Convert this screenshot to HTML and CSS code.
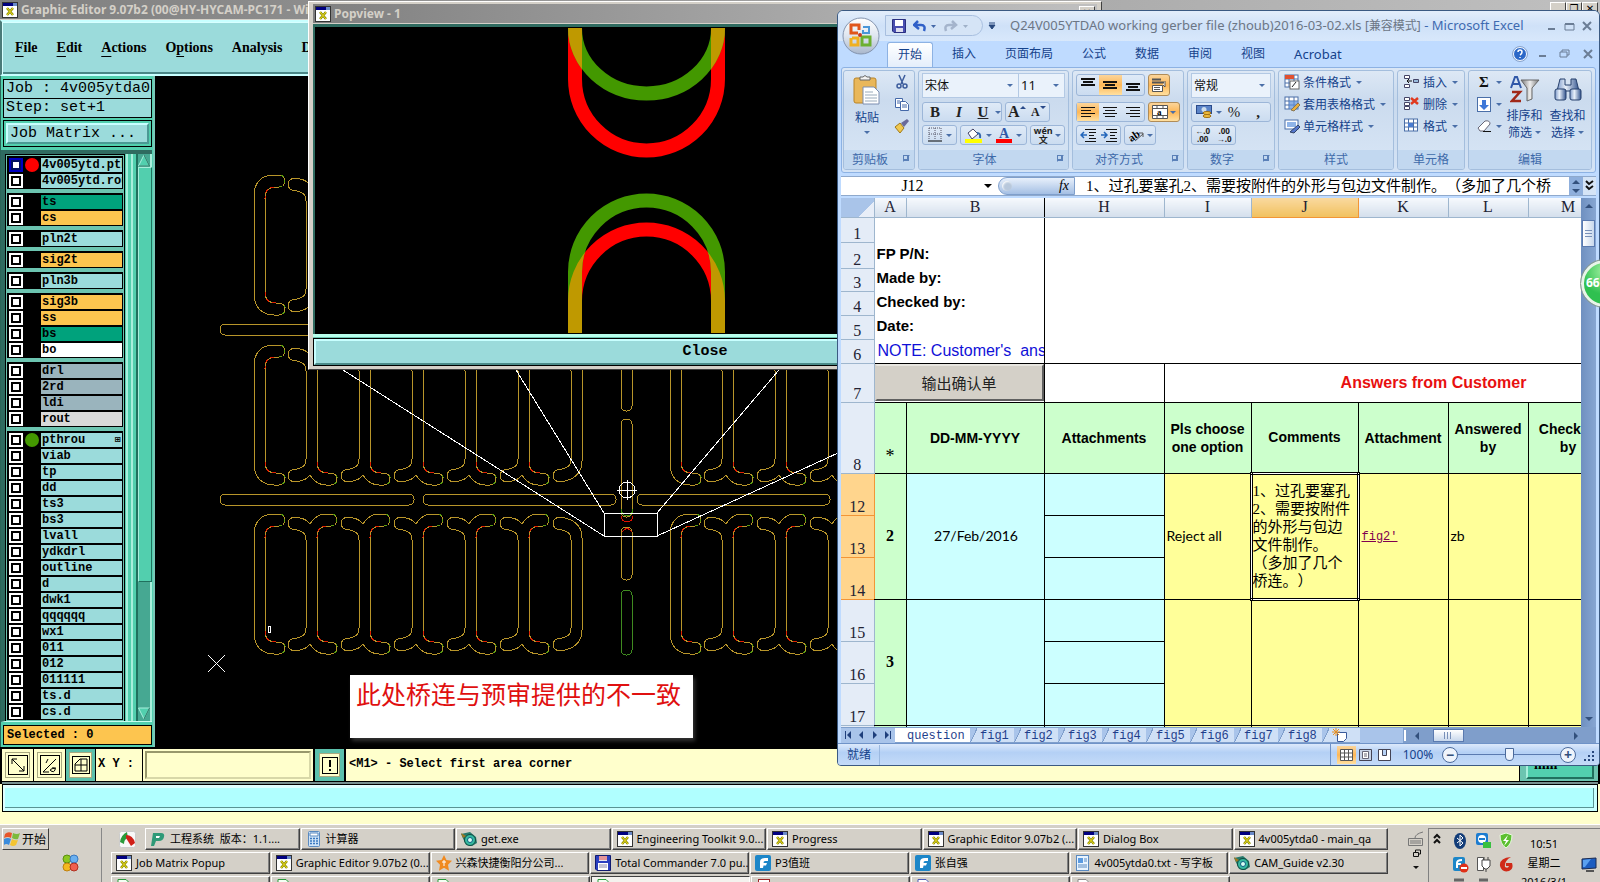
FILE: index.html
```html
<!DOCTYPE html>
<html lang="zh-CN">
<head>
<meta charset="utf-8">
<title>Graphic Editor 9.07b2</title>
<link rel="stylesheet" href="styles.css">
</head>
<body>
<svg class="defs" aria-hidden="true">
  <defs>
    <symbol id="xapp" viewBox="0 0 16 16"><rect x="0.500" y="0.500" width="15" height="15" fill="#fff" stroke="#333"/><rect x="1" y="1" width="10" height="3" fill="#000080"/><rect x="11" y="1" width="4" height="3" fill="#6a8ac8"/><path d="M5 6l6 7M11 6l-6 7" stroke="#8a8a00" stroke-width="2.500"/><path d="M5 6l6 7M11 6l-6 7" stroke="#f0e020" stroke-width="1"/></symbol>
    <g id="wl"><path d="M0 21C0 7 8 0 20 0H25C33 0 33 12 25 12H22C14 12 11 16 11 24V117C11 124 14 128 22 128H25C33 128 33 140 25 140H20C8 140 0 132 0 119Z"/></g>
    <g id="wm"><path d="M0 26C0 18 -5 17 -9 16C-16 16 -18 13 -18 9C-18 4 -12 2 -6 4Q0 5 4 10Q10 0 20 0H25C33 0 33 12 25 12H22C14 12 11 16 11 24V117C11 124 14 128 22 128H25C33 128 33 140 25 140H20Q10 140 4 130Q0 135 -6 136C-12 138 -18 136 -18 131C-18 127 -16 124 -9 124C-5 123 0 122 0 114Z"/></g>
    <g id="wr"><path d="M0 26C0 18 -5 17 -9 16C-16 16 -18 13 -18 9C-18 4 -12 2 -6 4Q11 8 11 24V116Q11 132 -6 136C-12 138 -18 136 -18 131C-18 127 -16 124 -9 124C-5 123 0 122 0 114Z"/></g>
    <g id="hooks">
      <path d="M20 12C14 12 11 16 11 24M11 117C11 124 14 128 22 128" stroke="#e02000" stroke-dasharray="4 3"/>
      <path d="M25 12C33 12 33 0 25 0M30 130C33 134 31 139 25 140" stroke="#5c9c10" stroke-dasharray="3 4"/>
    </g>
    <g id="block">
      <use href="#wl" x="255"/><use href="#wm" x="307"/><use href="#wm" x="360"/><use href="#wm" x="413"/><use href="#wm" x="466"/><use href="#wm" x="519"/><use href="#wr" x="572"/>
      <use href="#hooks" x="255"/><use href="#hooks" x="307"/><use href="#hooks" x="360"/><use href="#hooks" x="413"/><use href="#hooks" x="466"/><use href="#hooks" x="519"/>
      <use href="#wl" x="671"/><use href="#wm" x="723"/><use href="#wm" x="776"/><use href="#wm" x="829"/>
      <use href="#hooks" x="671"/><use href="#hooks" x="723"/><use href="#hooks" x="776"/>
    </g>
    <g id="slots"><rect x="221" y="0" width="194" height="11" rx="5"/><rect x="424" y="0" width="193" height="11" rx="5"/><rect x="638" y="0" width="193" height="11" rx="5"/></g>
    <mask id="redzone" maskUnits="userSpaceOnUse" x="300" y="0" width="800" height="400">
      <path d="M575 0V79A71 71 0 0 0 718 79V0M575 340V301A71 71 0 0 1 718 301V340" fill="none" stroke="#fff" stroke-width="14"/>
    </mask>
    <linearGradient id="ring" x2="0" y2="1"><stop stop-color="#fff"/><stop offset=".5" stop-color="#dfe6f0"/><stop offset="1" stop-color="#a9b7cc"/></linearGradient>
    <linearGradient id="steel" x2="1" y2="0"><stop stop-color="#7c98c8"/><stop offset=".4" stop-color="#e8f0fa"/><stop offset="1" stop-color="#34558f"/></linearGradient>
    <linearGradient id="funnel" x2="1" y2="0"><stop stop-color="#777"/><stop offset=".5" stop-color="#eee"/><stop offset="1" stop-color="#777"/></linearGradient>
    <symbol id="grid-ic" viewBox="0 0 16 16"><rect x="1" y="1" width="13" height="12" fill="#fff" stroke="#4a6fa8"/><path d="M1 5h13M1 9h13M5 1v12M10 1v12" stroke="#4a6fa8"/></symbol>
    <symbol id="sheet-ic" viewBox="0 0 16 16"><path d="M2 .5h8l4 4V15.500H2z" fill="#f4fff4" stroke="#2a9a3a"/><rect x="0" y="3" width="8" height="8" fill="#2fa040"/></symbol>
    <symbol id="flash" viewBox="0 0 16 16"><rect width="16" height="16" rx="2" fill="#1c86c8"/><path d="M5 13V7q0-4 5-4h3v3h-3q-1.500 0-1.500 2H12l-1 2.500H8.500L8 13z" fill="#fff"/></symbol>
    <symbol id="eye" viewBox="0 0 16 16"><path d="M0 3l9-2 6 5 1 6-5 3-6-1z" fill="#287a6c"/><circle cx="9" cy="9" r="5.500" fill="#35b9a0" stroke="#104a40"/><circle cx="9" cy="9" r="2.500" fill="#d8fff4" stroke="#0c5c80"/><path d="M0 2l5 3-3 2z" fill="#a07820"/></symbol>
  </defs>
</svg>

<main class="editor">
  <header class="titlebar"><svg class="ic16"><use href="#xapp"/></svg><span class="cap">Graphic Editor 9.07b2 (00@HY-HYCAM-PC171 - Windows)</span>
    <span class="winbtns"><button aria-label="Minimize">_</button><button aria-label="Restore">❐</button><button aria-label="Close">✕</button></span></header>
  <nav class="menubar"><a><u>F</u>ile</a><a><u>E</u>dit</a><a><u>A</u>ctions</a><a>O<u>p</u>tions</a><a>Analysis</a><a>DFM</a></nav>
  <div class="work">
    <aside class="panel">
      <div class="field">Job : 4v005ytda0</div>
      <div class="field step">Step: set+1</div>
      <div class="matrix"><button>Job Matrix ...</button></div>
      <div class="layers">
        <div class="list">
          <div class="grp">
            <label class="row"><input type="checkbox" class="sel"><i class="dot red"></i><span>4v005ytd.pth</span></label>
            <label class="row"><input type="checkbox"><i></i><span>4v005ytd.rou</span></label></div>
          <div class="grp">
            <label class="row"><input type="checkbox"><i></i><span class="green">ts</span></label>
            <label class="row"><input type="checkbox"><i></i><span class="amber">cs</span></label></div>
          <div class="grp"><label class="row"><input type="checkbox"><i></i><span>pln2t</span></label></div>
          <div class="grp"><label class="row"><input type="checkbox"><i></i><span class="amber">sig2t</span></label></div>
          <div class="grp"><label class="row"><input type="checkbox"><i></i><span>pln3b</span></label></div>
          <div class="grp">
            <label class="row"><input type="checkbox"><i></i><span class="amber">sig3b</span></label>
            <label class="row"><input type="checkbox"><i></i><span class="amber">ss</span></label>
            <label class="row"><input type="checkbox"><i></i><span class="green">bs</span></label>
            <label class="row"><input type="checkbox"><i></i><span class="white">bo</span></label></div>
          <div class="grp">
            <label class="row"><input type="checkbox"><i></i><span class="slate">drl</span></label>
            <label class="row"><input type="checkbox"><i></i><span class="slate">2rd</span></label>
            <label class="row"><input type="checkbox"><i></i><span class="slate">ldi</span></label>
            <label class="row"><input type="checkbox"><i></i><span class="pale">rout</span></label></div>
          <div class="grp">
            <label class="row"><input type="checkbox"><i class="dot grn"></i><span>pthrou<b class="mark">⊞</b></span></label>
            <label class="row"><input type="checkbox"><i></i><span>viab</span></label>
            <label class="row"><input type="checkbox"><i></i><span>tp</span></label>
            <label class="row"><input type="checkbox"><i></i><span>dd</span></label>
            <label class="row"><input type="checkbox"><i></i><span>ts3</span></label>
            <label class="row"><input type="checkbox"><i></i><span>bs3</span></label>
            <label class="row"><input type="checkbox"><i></i><span>lvall</span></label>
            <label class="row"><input type="checkbox"><i></i><span>ydkdrl</span></label>
            <label class="row"><input type="checkbox"><i></i><span>outline</span></label>
            <label class="row"><input type="checkbox"><i></i><span>d</span></label>
            <label class="row"><input type="checkbox"><i></i><span>dwk1</span></label>
            <label class="row"><input type="checkbox"><i></i><span>qqqqqq</span></label>
            <label class="row"><input type="checkbox"><i></i><span>wx1</span></label>
            <label class="row"><input type="checkbox"><i></i><span>011</span></label>
            <label class="row"><input type="checkbox"><i></i><span>012</span></label>
            <label class="row"><input type="checkbox"><i></i><span>011111</span></label>
            <label class="row"><input type="checkbox"><i></i><span>ts.d</span></label>
            <label class="row"><input type="checkbox"><i></i><span>cs.d</span></label></div>
        </div>
        <div class="vscroll"><svg width="12" height="13"><path d="M6 1L11.500 12H.5z" fill="#52cfae" stroke="#a8efdc"/><path d="M6 1l5.500 11H1" fill="none" stroke="#20705e"/></svg><div class="thumb"></div><svg width="12" height="13"><path d="M6 12L.5 1h11z" fill="#52cfae" stroke="#a8efdc"/><path d="M11.500 1L6 12" stroke="#20705e"/></svg></div>
      </div>
      <div class="selected">Selected : 0</div>
    </aside>
    <svg class="canvas">
      <g transform="translate(-155 -76)" fill="none" stroke="#b8952a" shape-rendering="crispEdges">
        <use href="#block" y="175"/><use href="#block" y="345"/><use href="#block" y="514"/>
        <use href="#slots" y="324"/><use href="#slots" y="494"/>
        <rect x="622" y="300" width="11" height="111" rx="5"/><rect x="622" y="419" width="11" height="98" rx="5"/>
        <path d="M622 516q1 6 6 6t6-6" stroke="#e01000"/><path d="M622 509q1 7 6 7t6-7" stroke="#3c9010"/>
        <rect x="622" y="527" width="11" height="53" rx="5"/><path d="M623 532q5-7 10 0" stroke="#e01000"/>
        <rect x="622" y="590" width="11" height="65" rx="5" stroke="#3f8a20"/>
        <g stroke="#fff"><path d="M344 370L605 536M517 370l88 143M780 370L658 513M658 536l181-83M605 513h53v23h-53z"/>
        <circle cx="628" cy="490" r="8"/><path d="M618 490h20M628 480v20M209 655l17 17M226 655l-17 17"/><rect x="269" y="626" width="2" height="6"/></g>
      </g>
    </svg>
    <p class="note">此处桥连与预审提供的不一致</p>
  </div>
  <div class="tools">
    <button class="tool" aria-label="Zoom"><svg width="20" height="20" fill="none" stroke="#000"><rect x=".5" y=".5" width="19" height="19"/><path d="M4 4l12 12M4 9V4h5M16 11v5h-5"/></svg></button>
    <button class="tool" aria-label="Angle"><svg width="20" height="20" fill="none" stroke="#000"><rect x=".5" y=".5" width="19" height="19"/><path d="M3 17L16 4M3 17h6M8 4l-2 4M12 13q4-1 3 2t-4 1 5-3"/></svg></button>
    <button class="tool on" aria-label="Grid"><svg width="18" height="18" fill="none" stroke="#000"><rect x=".5" y=".5" width="17" height="17"/><path d="M3 15V8l5-5h7v12zM9 3v12M3 9h12"/></svg></button>
    <label class="xy" for="xy">X Y :</label>
    <span class="xybox"><input id="xy" type="text"></span>
    <button class="tool on bang" aria-label="Alert"><svg width="16" height="17" fill="none" stroke="#000"><rect x=".5" y=".5" width="15" height="16"/><path d="M8 3v7M8 12v2" stroke-width="2"/></svg></button>
    <output class="msg">&lt;M1&gt; - Select first area corner</output>
    <div class="units"><button>mm</button></div>
  </div>
  <div class="cmd"></div>
</main>

<section class="popview">
  <header class="titlebar"><svg class="ic16"><use href="#xapp"/></svg><span class="cap">Popview - 1</span><span class="winbtns"><button aria-label="Close">✕</button></span></header>
  <svg class="view"><g transform="translate(-315 -27)" fill="none" stroke-width="14">
    <path d="M575 28V79A71 71 0 0 0 718 79V28M575 333V301A71 71 0 0 1 718 301V333" stroke="#f00"/>
    <path d="M575 28A71 65 0 0 0 718 28M575 333V272A71 71 0 0 1 718 272V333" stroke="#439800"/>
    <path d="M575 28A71 65 0 0 0 718 28M575 333V272A71 71 0 0 1 718 272V333" stroke="#bf9900" mask="url(#redzone)"/>
  </g></svg>
  <div class="closebar"><button>Close</button></div>
</section>

<section class="excel">
  <header class="xtitle">
    <div class="qat">
      <svg width="14" height="14"><path d="M.5.500h13v13H2L.5 12z" fill="#4a4fb0" stroke="#2a2f80"/><rect x="3" y="1" width="8" height="6" fill="#fff"/><rect x="4" y="9" width="7" height="4" fill="#dde"/></svg>
      <svg width="24" height="14" class="q2"><path d="M5 2L1 6l5 4M2 6h6q5 0 3 6" fill="none" stroke="#3060c8" stroke-width="2.500"/><path d="M18 6h5l-2.500 3z" fill="#4468a8"/></svg>
      <svg width="24" height="14" class="q3"><path d="M8 2l4 4-5 4M11 6H5q-5 0-3 6" fill="none" stroke="#a4b4cc" stroke-width="2.500"/><path d="M19 6h5l-2.500 3z" fill="#9fb0c8"/></svg>
    </div>
    <svg width="8" height="8" class="qmore"><path d="M1 1h6M1 3h6L4 7z" fill="#26477c" stroke="#26477c"/></svg>
    <h1>Q24V005YTDA0 working gerber file (zhoub)2016-03-02.xls <small>[兼容模式]</small> <b>- Microsoft Excel</b></h1>
    <span class="wc"><svg width="44" height="12" fill="none" stroke="#6b7d95" stroke-width="2"><path d="M0 9h7"/><path d="M17 4h9v6h-9z" stroke-width="1"/><path d="M17 4h9"/><path d="M35 2l8 8M43 2l-8 8"/></svg></span>
  </header>
  <svg class="orb" width="38" height="38"><circle cx="19" cy="19" r="18" fill="url(#ring)" stroke="#8494ae"/><g fill="none" stroke-width="3"><path d="M16 16H9V8h8v5" stroke="#e0561c"/><path d="M21 13v3h6v-6h-6" stroke="#4a96d8" stroke-width="2"/><path d="M9 21v7h7v-7h-6" stroke="#f0b020"/><path d="M20 20h8v8h-8z" stroke="#6cb030"/></g><circle cx="18" cy="18" r="2" fill="#c83c20"/></svg>
  <nav class="xtabs">
    <a class="on">开始</a><a>插入</a><a>页面布局</a><a>公式</a><a>数据</a><a>审阅</a><a>视图</a><a>Acrobat</a>
    <span class="wc"><svg width="82" height="16" fill="none" stroke="#6b7d95"><circle cx="8" cy="8" r="6.500" fill="#2c68c8" stroke="#fff"/><circle cx="8" cy="8" r="7.500" stroke="#8aa4cc"/><path d="M6 6q0-2 2-2t2 2-2 3M8 11v1" stroke="#fff" stroke-width="1.500"/><path d="M27 10h7" stroke-width="2"/><path d="M48 6h7v5h-7zM50 6V4h7v5h-2"/><path d="M72 4l8 8M80 4l-8 8" stroke-width="2"/></svg></span>
  </nav>
  <div class="ribbon">
    <div class="rg clip"><div class="rb">
      <button class="big"><svg width="28" height="30"><rect x="1" y="3" width="22" height="25" rx="2" fill="#e9b75a" stroke="#b98426"/><path d="M7 5V2h3q2-3 4 0h3v3z" fill="#f4f4f4" stroke="#666"/><path d="M10 12h11l5 5v12H10z" fill="#fff" stroke="#7a8db0"/><path d="M12 17h8M12 20h12M12 23h12M12 26h12" stroke="#9ab"/></svg><span>粘贴</span><i class="car"></i></button>
      <div class="stack">
        <button aria-label="剪切"><svg width="16" height="16" fill="none" stroke="#3c5c9c"><path d="M5 1l4 9M11 1L7 10" stroke-width="1.500"/><circle cx="5" cy="12" r="2" stroke-width="1.500"/><circle cx="11" cy="12" r="2" stroke-width="1.500"/></svg></button>
        <button aria-label="复制"><svg width="16" height="16" fill="#fff" stroke="#4468a8"><path d="M1.500 2.500h7v9h-7z"/><path d="M6.500 5.500h5l3 3v6h-8z"/><path d="M8 9h5M8 11h5M3 5h3M3 7h3"/></svg></button>
        <button aria-label="格式刷"><svg width="16" height="16"><path d="M1 9l5-4 4 5-4 5z" fill="#f0c850" stroke="#a07818"/><path d="M7 5l6-4 2 2-5 6z" fill="#6a6a9a"/></svg></button>
      </div></div><h2 class="hasdl">剪贴板<i class="dl"></i></h2></div>
    <div class="rg font"><div class="rb rows">
      <div class="r"><span class="combo w95"><select aria-label="字体"><option>宋体</option></select></span><span class="combo w46"><select aria-label="字号"><option>11</option></select></span></div>
      <div class="r"><span class="seg s80"><button><b>B</b></button><button><b><i>I</i></b></button><button><b><u>U</u></b></button><i class="car"></i></span><span class="seg s45"><button class="ga">A<i class="gu"></i></button><button class="sa">A<i class="gd"></i></button></span></div>
      <div class="r"><span class="seg s35"><svg width="16" height="16" fill="none" stroke="#556" stroke-dasharray="1 1"><path d="M2 1v12M8 1v12M14 1v12M2 1h12M2 7h12"/><path d="M1 14h14" stroke="#000" stroke-dasharray="none"/></svg><i class="car"></i></span>
        <span class="seg s66"><svg width="17" height="16"><path d="M3 6l5-4 5 5-6 5z" fill="#fff" stroke="#446"/><path d="M12 6q4 0 3 5" fill="none" stroke="#36a" stroke-width="2"/><rect y="12" width="17" height="4" fill="#ff0"/></svg><i class="car"></i><span class="fc">A</span><i class="car"></i></span>
        <span class="seg s35"><span class="wen"><span>wén</span><span>文</span></span><i class="car"></i></span></div>
    </div><h2 class="hasdl">字体<i class="dl"></i></h2></div>
    <div class="rg align"><div class="rb rows">
      <div class="r"><span class="seg s69 top"><button><svg width="14" height="14"><path d="M0 1h14M2 4h10M0 7h14" stroke="#111" stroke-width="2"/></svg></button><button class="hot"><svg width="14" height="14"><path d="M0 4h14M2 7h10M0 10h14" stroke="#111" stroke-width="2"/></svg></button><button><svg width="14" height="14"><path d="M0 6h14M2 9h10M0 12h14" stroke="#111" stroke-width="2"/></svg></button></span><span class="seg s22 top hot"><svg width="16" height="16" fill="#fff" stroke="#555"><path d="M1 2.500h9M1 5.500h12" stroke-width="2"/><path d="M1.500 8.500h10v6h-10z"/><path d="M3 10.500h6M3 12.500h6M14 4v6l-2-2"/></svg></span></div>
      <div class="r"><span class="seg s69"><button class="hot"><svg width="14" height="13"><path d="M0 1.500h14M0 4.500h10M0 7.500h14M0 10.500h10" stroke="#111"/></svg></button><button><svg width="14" height="13"><path d="M0 1.500h14M2 4.500h10M0 7.500h14M2 10.500h10" stroke="#111"/></svg></button><button><svg width="14" height="13"><path d="M0 1.500h14M4 4.500h10M0 7.500h14M4 10.500h10" stroke="#111"/></svg></button></span><span class="seg s32 hot"><svg width="16" height="14"><path d="M.5.500h15v13H.5zM5 .5v3M11 .5v3M5 10.500v3M11 10.500v3M.5 3.500h15M.5 10.500h15" fill="#fff" stroke="#555"/><text x="5" y="10" font-size="9" font-weight="bold">a</text></svg><i class="car"></i></span></div>
      <div class="r"><span class="seg s45"><button><svg width="16" height="14"><path d="M5 1.500h11M9 4.500h7M9 7.500h5M9 10.500h7M5 13.500h11" stroke="#111"/><path d="M7 7H1M4 4L1 7l3 3" stroke="#26b" stroke-width="1.500" fill="none"/></svg></button><button><svg width="16" height="14"><path d="M5 1.500h11M9 4.500h7M9 7.500h5M9 10.500h7M5 13.500h11" stroke="#111"/><path d="M0 7h6M3 4l3 3-3 3" stroke="#26b" stroke-width="1.500" fill="none"/></svg></button></span><span class="seg s32"><svg width="18" height="16"><text x="1" y="13" font-size="11" font-weight="bold" transform="rotate(-35 6 9)">ab</text><path d="M8 14l8-7M16 6v4M16 6h-4" stroke="#555"/></svg><i class="car"></i></span></div>
    </div><h2 class="hasdl">对齐方式<i class="dl"></i></h2></div>
    <div class="rg num"><div class="rb rows">
      <div class="r"><span class="combo w80"><select aria-label="数字格式"><option>常规</option></select></span></div>
      <div class="r"><span class="seg s80"><button><svg width="17" height="16"><rect x=".5" y="1.500" width="15" height="8" fill="#5b84c8" stroke="#2a4a8a"/><circle cx="8" cy="5.500" r="2.500" fill="#cde"/><ellipse cx="11" cy="9" rx="4" ry="1.500" fill="#f4c040" stroke="#a07010"/><ellipse cx="11" cy="12" rx="4" ry="1.500" fill="#f4c040" stroke="#a07010"/></svg></button><i class="car"></i><button>%</button><button><b>,</b></button></span></div>
      <div class="r"><span class="seg s45"><button class="dec">←.0<br>.00</button><button class="dec">.00<br>→.0</button></span></div>
    </div><h2 class="hasdl">数字<i class="dl"></i></h2></div>
    <div class="rg sty"><div class="rb lst">
      <button><svg width="16" height="16"><use href="#grid-ic"/><path d="M1 1h9v4H1z" fill="#e05030"/><rect x="6" y="7" width="9" height="8" fill="#fff" stroke="#666"/><path d="M8 13l4-5" stroke="#222"/></svg>条件格式<i class="car"></i></button>
      <button><svg width="16" height="16"><use href="#grid-ic"/><path d="M5 5h9v8H5z" fill="#5d8fd8" opacity=".7"/><path d="M7 14l7-7 2 2-6 6z" fill="#e8b040" stroke="#875"/></svg>套用表格格式<i class="car"></i></button>
      <button><svg width="16" height="16"><rect x="1" y="2" width="13" height="9" fill="#fff" stroke="#4a6fa8"/><path d="M3 4h9v5H3z" fill="#8fb4e8"/><path d="M6 14l8-7 2 2-6 6z" fill="#5577cc" stroke="#346"/></svg>单元格样式<i class="car"></i></button>
    </div><h2>样式</h2></div>
    <div class="rg cel"><div class="rb lst">
      <button><svg width="17" height="16" fill="#fff" stroke="#446"><path d="M1.500 1.500h5v3h-5zM1.500 10.500h5v3h-5z"/><path d="M10.500 5.500h5v3h-5z" fill="#9bd"/><path d="M4 7h5M4 7l2-2M4 7l2 2" stroke="#111"/></svg>插入<i class="car"></i></button>
      <button><svg width="17" height="16" fill="#fff" stroke="#446"><path d="M1.500 1.500h5v3h-5zM1.500 6.500h5v3h-5zM1.500 10.500h5v3h-5z"/><path d="M8 2l7 6M15 2L8 8" stroke="#e03a20" stroke-width="2.500"/></svg>删除<i class="car"></i></button>
      <button><svg width="17" height="16"><use href="#grid-ic"/><path d="M5 5h5v4H5z" fill="#4a7cd0"/></svg>格式<i class="car"></i></button>
    </div><h2>单元格</h2></div>
    <div class="rg edt"><div class="rb">
      <div class="lst ed">
        <button><b class="sig">Σ</b><i class="car"></i></button>
        <button><svg width="14" height="15"><rect x=".5" y=".5" width="13" height="14" fill="#fff" stroke="#4a6fa8"/><path d="M5 3h4v5h3l-5 5-5-5h3z" fill="#3f78d8"/></svg><i class="car"></i></button>
        <button><svg width="14" height="14"><path d="M1 9l7-7q5-1 5 3l-6 7H3z" fill="#fff" stroke="#667"/><path d="M6 12.500h8" stroke="#111"/></svg><i class="car"></i></button></div>
      <button class="big w"><svg width="30" height="28"><path d="M11 5h18l-7 8v11l-5 2V13z" fill="url(#funnel)" stroke="#666"/><path d="M1 13L5 2h2l4 11M3 9h6" fill="none" stroke="#3058a8" stroke-width="2"/><path d="M2 17h8L2 26h9" fill="none" stroke="#a02818" stroke-width="2.500"/></svg><span>排序和</span><span>筛选<i class="car"></i></span></button>
      <button class="big w"><svg width="28" height="28" stroke="#26406c"><path d="M6 4h5v6h6V4h5l3 12H3z" fill="url(#steel)"/><rect x="1" y="14" width="11" height="11" rx="2" fill="url(#steel)"/><rect x="16" y="14" width="11" height="11" rx="2" fill="url(#steel)"/></svg><span>查找和</span><span>选择<i class="car"></i></span></button>
    </div><h2>编辑</h2></div>
  </div>
  <div class="fbar"><span class="nbox"><input aria-label="名称框" value="J12"><i class="tri"></i></span><span class="fx"><i class="knob"></i><em>fx</em></span><input class="formula" aria-label="编辑栏" value="1、过孔要塞孔2、需要按附件的外形与包边文件制作。（多加了几个桥"><span class="spin"><i class="up"></i><i class="dn"></i></span><button class="exp" aria-label="展开"><svg width="9" height="12" fill="none" stroke="#111" stroke-width="2"><path d="M1 1l3 3 4-3M1 6l3 3 4-3"/></svg></button></div>
  <div class="sheet">
    <div class="gridwrap">
      <table>
        <colgroup><col class="c33"><col class="c32"><col class="c138"><col class="c120"><col class="c87"><col class="c107"><col class="c90"><col class="c80"><col class="c80"><col class="c95"></colgroup>
        <thead><tr class="h19"><th class="corner"></th><th>A</th><th class="frz">B</th><th>H</th><th>I</th><th class="act">J</th><th>K</th><th>L</th><th>M</th><th></th></tr></thead>
        <tbody>
        <tr class="h25"><th>1</th><td colspan="2" class="frz"></td><td colspan="7"></td></tr>
        <tr class="h26"><th>2</th><td colspan="2" class="frz lb">FP P/N:</td><td colspan="7"></td></tr>
        <tr class="h23"><th>3</th><td colspan="2" class="frz lb">Made by:</td><td colspan="7"></td></tr>
        <tr class="h24"><th>4</th><td colspan="2" class="frz lb">Checked by:</td><td colspan="7"></td></tr>
        <tr class="h24"><th>5</th><td colspan="2" class="frz lb">Date:</td><td colspan="7"></td></tr>
        <tr class="h24 line"><th>6</th><td colspan="2" class="frz nt">NOTE: Customer's&nbsp; answer</td><td colspan="7"></td></tr>
        <tr class="h39 bx"><th>7</th><td colspan="2" class="bt"><button>输出确认单</button></td><td></td><td colspan="6" class="ans">Answers from Customer</td></tr>
        <tr class="h71 bx hd"><th>8</th><td class="star">*</td><td>DD-MM-YYYY</td><td>Attachments</td><td>Pls choose one option</td><td>Comments</td><td>Attachment</td><td>Answered by</td><td>Checked<br>by</td><td></td></tr>
        <tr class="h42 bx bd"><th class="act">12</th><td rowspan="3" class="n">2</td><td rowspan="3" class="cy ct">27/Feb/2016</td><td class="cy"></td><td rowspan="3">Reject all</td><td rowspan="3" class="cur">1、过孔要塞孔<br>2、需要按附件<br>的外形与包边<br>文件制作。<br>（多加了几个<br>桥连。）</td><td rowspan="3"><a href="#fig2">fig2'</a></td><td rowspan="3">zb</td><td rowspan="3"></td><td rowspan="3"></td></tr>
        <tr class="h42 bx bd"><th class="act">13</th><td class="cy"></td></tr>
        <tr class="h42 bx bd"><th class="act">14</th><td class="cy"></td></tr>
        <tr class="h42 bx bd"><th>15</th><td rowspan="3" class="n">3</td><td rowspan="3" class="cy"></td><td class="cy"></td><td rowspan="3"></td><td rowspan="3"></td><td rowspan="3"></td><td rowspan="3"></td><td rowspan="3"></td><td rowspan="3"></td></tr>
        <tr class="h42 bx bd"><th>16</th><td class="cy"></td></tr>
        <tr class="h42 bx bd"><th>17</th><td class="cy"></td></tr>
        <tr class="h42 bx bd"><th></th><td class="n"></td><td class="cy"></td><td class="cy"></td><td></td><td></td><td></td><td></td><td></td><td></td></tr>
        </tbody>
      </table>
    </div>
    <div class="xscroll"><i class="up"></i><span class="xthumb"></span><i class="dn"></i></div>
  </div>
  <div class="stabs">
    <svg width="54" height="14" fill="#1f3f7c"><path d="M4 3v8h1V3zM10 3v8L6 7zM22 3v8l-4-4zM32 3v8l4-4zM44 3v8l4-4zM49 3v8h1V3z"/></svg>
    <a class="on">question</a><a>fig1</a><a>fig2</a><a>fig3</a><a>fig4</a><a>fig5</a><a>fig6</a><a>fig7</a><a>fig8</a>
    <a class="new"><svg width="17" height="14"><path d="M5.500 4.500h9v6l-3 3h-6z" fill="#fff" stroke="#3a5a9a"/><path d="M4 0v8M0 4h8M1 1l6 6M7 1L1 7" stroke="#e89020"/></svg></a>
    <div class="hs"><i class="split"></i><i class="lf"></i><span class="hthumb"></span><i class="rt"></i></div>
  </div>
  <footer class="status"><span class="ready">就绪</span>
    <span class="vw"><button class="hot" aria-label="普通"><svg width="13" height="12"><path d="M.5.500h12v11H.5zM.5 4h12M.5 8h12M4.500.5v11M8.500.5v11" fill="#fff" stroke="#555"/></svg></button><button aria-label="页面布局"><svg width="13" height="12"><path d="M.5.500h12v11H.5z" fill="#c8d4e8" stroke="#445"/><path d="M3.500 2.500h6v7h-6zM5 5h3M5 7h3" fill="#fff" stroke="#667"/></svg></button><button aria-label="分页预览"><svg width="13" height="12"><path d="M.5.500h12v11H.5zM4.500.5v6h4v-6" fill="#fff" stroke="#445"/></svg></button></span>
    <span class="pct">100%</span><button class="zb" aria-label="缩小">−</button><input type="range" aria-label="缩放"><button class="zb" aria-label="放大">+</button><svg width="12" height="12" fill="#27477c"><path d="M9 2h2v2H9zM5 6h2v2H5zM9 6h2v2H9zM1 10h2v2H1zM5 10h2v2H5zM9 10h2v2H9z"/></svg>
  </footer>
</section>
<div class="badge">66</div>

<footer class="taskbar">
  <div class="startcol">
    <button class="start"><svg width="17" height="16"><path d="M1 3q3-3 7-1L7 7Q4 5 0 7z" fill="#e8562a"/><path d="M9 2q4 2 7 0l-2 6q-3 1-6-1z" fill="#7cba3c"/><path d="M0 8q4-2 7 0l-2 6q-3-2-5 0z" fill="#3c8cdc"/><path d="M8 8q3 2 6 1l-2 5q-3 2-6 0z" fill="#f4c430"/></svg>开始</button>
    <svg class="clover" width="18" height="18"><circle cx="5" cy="5" r="4" fill="#8cc820" stroke="#5a9010"/><circle cx="12" cy="5" r="4" fill="#6ab0f0" stroke="#3a78c0"/><circle cx="5" cy="13" r="4" fill="#f4b820" stroke="#c08010"/><circle cx="12" cy="13" r="4" fill="#f06050" stroke="#b03020"/></svg>
  </div>
  <div class="tasks">
    <div class="trow"><svg class="quick" width="17" height="17"><rect x=".5" y=".5" width="16" height="16" rx="2" fill="#f8f8f8" stroke="#ccc"/><path d="M1 11Q2 4 8 1l1 6q-4 1-4 6z" fill="#2a9a3a"/><path d="M7 4q7 0 9 8l-4 3-5-8z" fill="#d02018"/></svg>
      <button><svg class="ic16" viewBox="0 0 16 16"><path d="M3 2h8q4 0 3 4t-5 4H6l-2 5H1z" fill="#2f9a78"/><path d="M6 5h4l-1 2H6z" fill="#fff"/></svg><span>工程系统&nbsp; 版本：1.1....</span></button>
      <button><svg class="ic16" viewBox="0 0 16 16"><rect x="2.500" y=".5" width="11" height="15" rx="1" fill="#cfe4f8" stroke="#5a8ac0"/><path d="M4 2h8v3H4z" fill="#fff" stroke="#5a8ac0"/><path d="M4 7.500h8M4 10h8M4 12.500h8" stroke="#3a78c0" stroke-width="1.500" stroke-dasharray="2 1"/></svg><span>计算器</span></button>
      <button><svg class="ic16"><use href="#eye"/></svg><span>get.exe</span></button>
      <button><svg class="ic16"><use href="#xapp"/></svg><span>Engineering Toolkit 9.0...</span></button>
      <button><svg class="ic16"><use href="#xapp"/></svg><span>Progress</span></button>
      <button><svg class="ic16"><use href="#xapp"/></svg><span>Graphic Editor 9.07b2 (...</span></button>
      <button><svg class="ic16"><use href="#xapp"/></svg><span>Dialog Box</span></button>
      <button><svg class="ic16"><use href="#xapp"/></svg><span>4v005ytda0 - main_qa</span></button></div>
    <div class="trow">
      <button><svg class="ic16"><use href="#xapp"/></svg><span>Job Matrix Popup</span></button>
      <button><svg class="ic16"><use href="#xapp"/></svg><span>Graphic Editor 9.07b2 (0...</span></button>
      <button><svg class="ic16" viewBox="0 0 16 16"><path d="M8 0l2.500 5 5.500.800-4 4 1 6-5-3-5 3 1-6-4-4L5.500 5z" fill="#f08a20"/><path d="M6 7h4M8 5v6" stroke="#fff"/></svg><span>兴森快捷衡阳分公司...</span></button>
      <button><svg class="ic16" viewBox="0 0 16 16"><path d="M.5.500h15v15H2L.5 14z" fill="#2a3fc0" stroke="#101a70"/><rect x="4" y="1" width="8" height="5" fill="#e8e8f0"/><path d="M4 2h8M4 4h8" stroke="#e04040"/><rect x="3" y="8" width="10" height="7" fill="#fff"/><path d="M4 10h8M4 12h8" stroke="#88a"/></svg><span>Total Commander 7.0 pu...</span></button>
      <button><svg class="ic16"><use href="#flash"/></svg><span>P3值班</span></button>
      <button><svg class="ic16"><use href="#flash"/></svg><span>张自强</span></button>
      <button><svg class="ic16" viewBox="0 0 16 16"><rect x="1.500" y=".5" width="12" height="15" fill="#e8f4ff" stroke="#5a8ac0"/><rect x="3" y="3" width="5" height="5" fill="#5a9ae0"/><path d="M3 10h9M3 12h9M9 4h3M9 6h3" stroke="#5a8ac0"/></svg><span>4v005ytda0.txt - 写字板</span></button>
      <button><svg class="ic16"><use href="#eye"/></svg><span>CAM_Guide v2.30</span></button></div>
    <div class="trow third">
      <button><svg class="ic16"><use href="#sheet-ic"/></svg></button><button><svg class="ic16"><use href="#sheet-ic"/></svg></button><button><svg class="ic16"><use href="#sheet-ic"/></svg></button><button class="pressed"><svg class="ic16"><use href="#sheet-ic"/></svg></button><button><svg class="ic16" viewBox="0 0 16 16"><rect x="2.500" y=".5" width="11" height="15" fill="#fff" stroke="#a02828"/></svg></button><button><svg class="ic16" viewBox="0 0 16 16"><path d="M2 .5h8l4 4V15.500H2z" fill="#fff" stroke="#4a5ab8"/></svg></button><button><svg class="ic16" viewBox="0 0 16 16"><path d="M2 .5h8l4 4V15.500H2z" fill="#fff" stroke="#888"/></svg></button><i></i></div>
  </div>
  <div class="lang"><svg width="18" height="42" fill="none" stroke="#777"><path d="M1.500 8.500h14v7h-14zM3 11h11M3 13h11M8 8q0-4 8-6"/><path d="M6.500 22.500h5v4h-5zM8.500 22V20h5v4h-2" stroke="#111"/><path d="M6 36h6l-3 3z" fill="#111" stroke="none"/></svg></div>
  <div class="tray">
    <svg width="84" height="54" class="trayics"><path d="M5 9l3-3 3 3M5 14l3-3 3 3" fill="none" stroke="#111" stroke-width="2"/>
      <ellipse cx="31" cy="12" rx="6" ry="8" fill="#123c78"/><path d="M28 9l6 5-3 3V6l3 3-6 5" fill="none" stroke="#fff"/>
      <rect x="47" y="4" width="12" height="12" rx="2" fill="#1c7cd0"/><circle cx="53" cy="10" r="4" fill="#fff"/><path d="M50 10h6" stroke="#1c7cd0" stroke-width="2"/><rect x="54" y="13" width="8" height="6" fill="#38c040"/>
      <path d="M71 6l6-2 6 2q0 9-6 13-6-4-6-13z" fill="#5cc030" stroke="#e8f8e0"/><path d="M79 6l-5 6h3l-2 5 5-6h-3z" fill="#fff"/>
      <rect x="24" y="28" width="12" height="14" rx="2" fill="#1c86c8"/><path d="M28 39v-5q0-3 5-3M28 35h4" stroke="#fff" stroke-width="2" fill="none"/><circle cx="35" cy="39" r="4.500" fill="#e03018"/><path d="M32 39h6" stroke="#fff" stroke-width="2"/>
      <path d="M48.500 28.500h6v13h-6z" fill="#fff" stroke="#555"/><path d="M53 31h8v6l-3 3h-2l-3-3zM55 31v-3M59 31v-3M57 40v3" fill="#fff" stroke="#444"/>
      <path d="M82 28q-12 1-11 9 2 7 9 5 5-2 3-8h-6v3h3q-1 3-4 1-1-6 6-10z" fill="#d02a18"/>
      <path d="M25 51h10M50 51h9" stroke="#666" stroke-width="3"/></svg>
    <div class="clock"><span>10:51</span><span>星期二</span><span>2016/3/1</span></div>
    <svg width="17" height="16" class="mon"><path d="M1 2l14-1v10l-14 1z" fill="#1c5cc0" stroke="#1a2a50"/><path d="M2 3l8-1-6 8H2z" fill="#5aa0f0"/><path d="M5 14h8" stroke="#555" stroke-width="2"/></svg>
  </div>
</footer>
</body>
</html>
```
FILE: styles.css
```css
* { box-sizing: border-box; }
html, body { height: 100%; }
body { margin: 0; overflow: hidden; display: flex; flex-direction: column; position: relative; background: #000; font: 12px/16px "Noto Sans", "Noto Sans CJK SC", sans-serif; color: #000; text-spacing-trim: space-all; }
button, input, select { font: inherit; color: inherit; margin: 0; padding: 0; border: 0; background: none; border-radius: 0; text-spacing-trim: space-all; }
h1, h2, p { margin: 0; font-weight: normal; }
svg { flex: none; display: block; }
.defs { position: absolute; width: 0; height: 0; }
.ic16 { width: 16px; height: 16px; }

/* graphic editor */
.editor { flex: 1; min-height: 0; display: flex; flex-direction: column; background: #ffffcc; }
.titlebar { height: 20px; flex: none; display: flex; align-items: center; gap: 3px; padding: 0 2px; background: linear-gradient(90deg, #808080, #c0c0c0); color: #d4d0c8; font: bold 12px/18px "Noto Sans", sans-serif; white-space: nowrap; border-bottom: 1px solid #d4d0c8; }
.cap { flex: 1; overflow: hidden; }
.winbtns { display: flex; align-self: flex-start; padding-top: 2px; }
.winbtns button { width: 16px; height: 14px; background: #d4d0c8; border: 1px solid; border-color: #fff #404040 #404040 #fff; color: #000; font: bold 10px/12px "DejaVu Sans", sans-serif; }
.menubar { height: 56px; flex: none; display: flex; align-items: center; gap: 19px; padding: 0 13px; background: #9bdbdb; border: 2px solid; border-color: #c8ffff #4a8a88 #c8ffff #4a7a78; box-shadow: inset 1px 1px #d8ffff, inset 0 -2px #4a8686; font: bold 14px/18px "Liberation Serif", serif; }
.menubar a u { text-underline-offset: 4px; }
.work { flex: 1; min-height: 0; display: flex; position: relative; background: #000; }
.panel { width: 155px; flex: none; display: flex; flex-direction: column; background: #52cfae; padding: 3px 1px 2px 2px; border-left: 1px solid #2a6558; border-right: 2px solid #78c8b8; margin-bottom: 1px; }
.field { height: 20px; border: 1px solid #000; background: #9bdbdb; font: 15px/18px "Liberation Mono", monospace; padding-left: 2px; white-space: nowrap; overflow: hidden; }
.step { height: 19px; border-top: 0; }
.matrix { height: 27px; margin-top: 2px; border: 1px solid #000; padding: 2px; }
.matrix button { width: 100%; height: 21px; text-align: left; padding-left: 2px; background: #9bdbdb; border: 2px solid; border-color: #c8ffff #4a9a94 #4a9a94 #c8ffff; font: 15px/16px "Liberation Mono", monospace; }
.layers { flex: 1; min-height: 0; margin: 3px 0 3px -2px; display: flex; justify-content: space-between; border-top: 4px solid #2f6b60; border-left: 4px solid #2f6b60; border-bottom: 1px solid #c8fff0; }
.list { width: 120px; overflow: hidden; border: 1px solid #000; border-bottom: 0; padding: 1px 1px 0; display: flex; flex-direction: column; gap: 4px; background: #6cc4b0; }
.grp { background: #000; padding: 2px 1px 0 2px; flex: none; }
.row { display: flex; gap: 2px; height: 16px; }
.row:last-child { height: 15px; }
.row input { appearance: none; width: 14px; height: 14px; flex: none; background: linear-gradient(#fff, #fff) center/6px 6px no-repeat, linear-gradient(#000, #000) center/10px 10px no-repeat, #fff; }
.row input.sel { background: linear-gradient(#fff, #fff) center/6px 6px no-repeat, linear-gradient(#001060, #001060) center/10px 10px no-repeat, #0000c0; }
.row i { width: 14px; height: 14px; flex: none; border-radius: 7px; }
.dot.red { background: #f00; }
.dot.grn { background: #439800; }
.row span { flex: 1; min-width: 0; height: 14px; overflow: hidden; background: #9bdbdb; font: bold 12px/14px "Liberation Mono", monospace; padding-left: 1px; white-space: nowrap; display: flex; }
.row .green { background: #00a27c; } .row .amber { background: #fdc54f; } .row .white { background: #fff; } .row .slate { background: #9ab4bd; } .row .pale { background: #d9d9d9; }
.mark { margin-left: auto; font: bold 8px/14px "DejaVu Sans", sans-serif; padding-right: 1px; }
.vscroll { width: 26px; display: flex; flex-direction: column; padding: 0 0 1px 12px; background: linear-gradient(90deg, #a8efdc 0 2px, #52cfae 2px 5px, #a8efdc 5px 7px, #52cfae 7px 10px, #20705e 10px 12px, #46a892 12px 24px, #a8efdc 24px); }
.thumb { height: 415px; background: #52cfae; border: 1px solid; border-color: #a8efdc #20705e #20705e #a8efdc; flex: none; }
.vscroll svg:last-child { margin-top: auto; }
.selected { height: 20px; border: 1px solid #000; background: #fdc54f; font: bold 12px/18px "Liberation Mono", monospace; padding-left: 3px; }
.canvas { flex: 1; min-width: 0; height: 100%; margin-left: -1px; }
.note { position: absolute; left: 350px; bottom: 10px; width: 343px; height: 63px; background: #fff; color: #e01010; font: 25px/36px "Noto Sans CJK SC", sans-serif; padding-left: 6px; white-space: nowrap; overflow: hidden; box-shadow: 2px 3px 4px #333; }

.tools { height: 36px; flex: none; display: flex; align-items: stretch; background: #000; padding: 1px 2px 3px; gap: 1px; }
.tool { width: 31px; display: flex; align-items: center; justify-content: center; background: #ffffcc; border: 3px solid #ffffcc; box-shadow: inset 0 0 0 1px #a8a880; }
.tool.on { width: 29px; border-color: #5cc0ac; }
.bang { margin: 0 1px; border-width: 4px; }
.xy { width: 46px; background: #ffffcc; padding-left: 2px; font: bold 12px/30px "Liberation Mono", monospace; white-space: pre; }
.xybox { width: 170px; display: flex; background: #ffffcc; padding: 2px; }
.xybox input { flex: 1; min-width: 0; border: 2px solid; border-color: #98986c #d8d8a8 #d8d8a8 #98986c; background: #ffffcc; padding: 0 4px; font: 14px/18px "Liberation Serif", serif; }
.msg { flex: 1; background: #ffffcc; font: bold 12px/30px "Liberation Mono", monospace; padding-left: 3px; }
.units { width: 78px; background: #6cc4b0; padding: 2px 4px 2px 6px; }
.units button { width: 100%; height: 100%; background: #52cfae; border: 2px solid; border-color: #a8efdc #20705e #20705e #a8efdc; font: bold 14px/16px "Liberation Serif", serif; text-align: left; padding: 0 0 0 6px; }
.cmd { height: 28px; flex: none; margin: 0 2px 12px; border: 1px solid #000; background: #b0ffff; box-shadow: inset 2px 3px #dfffff, inset -3px -3px #c8ffff, inset -4px -4px #5a9494, 0 -2px #789090; }

/* popview */
.popview { position: absolute; left: 308px; top: 1px; width: 794px; height: 369px; display: flex; flex-direction: column; background: #d4d0c8; padding: 2px 4px 3px; border: 1px solid; border-color: #fff #404040 #404040 #fff; }
.popview .titlebar { height: 20px; border: 0; border-bottom: 1px solid #d4d0c8; }
.view { width: 100%; flex: 1; min-height: 0; background: #000; border: solid #2f6b60; border-width: 3px 0 0 2px; }
.closebar { height: 32px; flex: none; background: #6cc4b0; border-top: 3px solid #b8ffec; padding: 2px 1px 1px; display: flex; }
.closebar button { flex: 1; background: #9bdbdb; border: 2px solid; border-color: #c8ffff #4a8a88 #4a8a88 #c8ffff; outline: 1px solid #000; font: bold 15px/20px "Liberation Mono", monospace; }

/* excel */
.excel { position: absolute; left: 837px; right: 0; top: 10px; bottom: 116px; display: flex; flex-direction: column; background: #bfdbff; border: 1px solid #3b5a82; border-radius: 6px 6px 4px 4px; padding: 0 3px; overflow: hidden; color: #15428b; }
.xtitle { height: 30px; flex: none; display: flex; align-items: center; margin: 0 -3px; padding: 0 7px 1px 47px; background: linear-gradient(#e3eefb, #cfe1f8 50%, #d8e8fb); }
.qat { width: 98px; height: 21px; display: flex; align-items: center; padding-left: 6px; border: 1px solid #a8bfdf; border-radius: 0 11px 11px 0; background: #d5e4f6; }
.q2 { margin-left: 7px; } .q3 { margin-left: 7px; }
.qmore { margin: 0 14px 0 5px; }
.xtitle h1 { flex: 1; font: 13px/20px "Noto Sans", "Noto Sans CJK SC", sans-serif; color: #6c7685; white-space: nowrap; }
.xtitle h1 small { font-size: 12px; }
.xtitle h1 b { font-weight: normal; color: #3e6ab0; }
.orb { position: absolute; left: 4px; top: 6px; }
.xtabs { height: 26px; flex: none; display: flex; align-items: flex-end; padding-left: 46px; }
.xtabs a { height: 25px; padding: 0 10px; margin-right: 9px; font: 12px/24px "Noto Sans", "Noto Sans CJK SC", sans-serif; white-space: nowrap; }
.xtabs a:last-of-type { font-size: 13px; }
.xtabs a.on { background: linear-gradient(#fff, #e4eefb); border: 1px solid #8db2e3; border-bottom: 0; border-radius: 3px 3px 0 0; line-height: 23px; }
.wc { margin-left: auto; }
.xtabs .wc { align-self: center; padding-right: 2px; }
.ribbon { height: 106px; flex: none; display: flex; gap: 3px; padding: 2px 3px 3px 1px; border: 1px solid #8db2e3; border-radius: 3px; background: linear-gradient(#dbe7f5, #c8d9ed 30%, #d4e3f5); }
.rg { height: 100px; display: flex; flex-direction: column; border: 1px solid #a4bedd; border-radius: 3px; background: linear-gradient(#dde8f5, #cbdbee 30%, #d8e6f6); overflow: hidden; }
.rg h2 { height: 19px; flex: none; display: flex; justify-content: center; background: #c2d8f0; color: #3e6aaa; font: 12px/18px "Noto Sans CJK SC", sans-serif; position: relative; }
.rg .hasdl { padding-right: 18px; }
.clip { width: 72px; } .font { width: 151px; } .align { width: 112px; } .num { width: 88px; } .sty { width: 116px; } .cel { width: 68px; } .edt { flex: 1; min-width: 124px; }
.dl { position: absolute; right: 4px; top: 5px; width: 7px; height: 7px; border: 1px solid #5a80b8; border-right-color: transparent; border-bottom-color: transparent; box-shadow: inset -3px -3px 0 -1px #5a80b8; }
.rb { flex: 1; display: flex; min-height: 0; }
.rows { flex-direction: column; padding: 2px 3px 0; gap: 4px; }
.r { display: flex; gap: 3px; height: 20px; flex: none; }
.r:first-child { height: 25px; } .r:nth-child(2) { margin-bottom: -1px; }
.car { display: inline-block; flex: none; width: 0; height: 0; border: 3px solid transparent; border-top-color: #4a6fa8; border-bottom: 0; }
.big { display: flex; flex-direction: column; align-items: center; width: 46px; padding-top: 4px; font-size: 12px; }
.big span { line-height: 17px; white-space: nowrap; } .big svg + span { margin-top: 4px; }
.big .car { margin-top: 5px; } .big span .car { margin: 0 0 3px 3px; }
.big.w { width: 43px; }
.stack { display: flex; flex-direction: column; gap: 6px; padding: 3px 4px; }
.combo { position: relative; height: 25px; background: #eaf2fb; border: 1px solid #b3c9e4; display: flex; color: #111; }
.combo + .combo { margin-left: -4px; }
.combo select { appearance: none; width: 100%; padding-left: 2px; font: 12px/23px "Noto Sans", "Noto Sans CJK SC", sans-serif; }
.combo::after { content: ""; position: absolute; right: 5px; top: 10px; border: 3px solid transparent; border-top-color: #4a6fa8; border-bottom: 0; }
.w95 { width: 97px; } .w46 { width: 47px; } .w46 select { font-size: 13px; } .w80 { width: 80px; }
.seg { display: flex; align-items: center; justify-content: space-evenly; height: 20px; border: 1px solid #9cb6d8; border-radius: 3px; background: linear-gradient(#dfeaf7, #cbdcf0); font: 15px/18px "Liberation Serif", serif; color: #222; }
.seg button { display: flex; align-items: center; justify-content: center; height: 18px; flex: 1; }
.top { margin-top: 1px; height: 22px; } .top button { height: 20px; }
.s80 { width: 80px; } .s45 { width: 45px; } .s35 { width: 35px; } .s66 { width: 67px; } .s69 { width: 69px; } .s22 { width: 22px; } .s32 { width: 32px; }
.hot { background: linear-gradient(#fbd59b, #fdb757 50%, #ffe0a0); }
.seg.hot { border-color: #b08c58; }
.seg .ga { font: bold 16px/18px "Liberation Serif", serif; } .seg .sa { font: bold 12px/18px "Liberation Serif", serif; }
.gu, .gd { align-self: flex-start; margin-top: 3px; border: 3px solid transparent; }
.gu { border-bottom-color: #2a4a8a; border-top: 0; } .gd { border-top-color: #2a4a8a; border-bottom: 0; }
.fc { width: 16px; height: 16px; text-align: center; font: bold 14px/13px "Liberation Serif", serif; color: #3058a8; border-bottom: 4px solid #f00; }
.wen { display: flex; flex-direction: column; align-items: center; font: bold 9px/9px "Noto Sans", "Noto Sans CJK SC", sans-serif; }
.dec { font: bold 8px/8px "Noto Sans", sans-serif; }
.lst { flex-direction: column; padding: 1px 0 0 5px; gap: 2px; }
.lst button { height: 20px; display: flex; align-items: center; gap: 3px; white-space: nowrap; font: 12px/18px "Noto Sans CJK SC", sans-serif; }
.lst .car { margin-left: 2px; }
.ed { width: 34px; flex: none; display: flex; gap: 2px; padding-left: 8px; } .sig { width: 14px; font: bold 15px/16px "Liberation Serif", serif; color: #111; }

.fbar { height: 20px; margin: 3px 0 2px; flex: none; display: flex; background: #fff; border: 1px solid #8fa9cc; border-width: 1px 0; color: #000; }
.nbox { width: 157px; display: flex; align-items: center; }
.nbox input { width: 143px; text-align: center; font: 16px/18px "Liberation Serif", serif; }
.tri { border: 4px solid transparent; border-top-color: #000; border-bottom: 0; }
.fx { width: 77px; display: flex; justify-content: space-between; align-items: center; padding: 0 5px 0 3px; border: 1px solid #7f9fcc; border-radius: 9px 0 0 9px; background: linear-gradient(#e8f0fb, #a4bfe4); font: 14px/16px "Liberation Serif", serif; }
.knob { width: 10px; height: 10px; border-radius: 5px; background: #b8c8dc; box-shadow: inset 1px 1px 2px #fff; }
.formula { flex: 1; min-width: 0; padding-left: 11px; font: 15px/18px "Liberation Serif", "Noto Sans CJK SC", sans-serif; }
.spin { width: 14px; display: flex; flex-direction: column; justify-content: space-around; align-items: center; background: #8fafdc; }
.up { border: 4px solid transparent; border-bottom-color: #33507c; border-top: 0; } .dn { border: 4px solid transparent; border-top-color: #33507c; border-bottom: 0; }
.exp { width: 13px; background: #d5e4f6; display: flex; align-items: center; justify-content: center; }

.sheet { flex: 1; min-height: 0; display: flex; }
.gridwrap { flex: 1; min-width: 0; overflow: hidden; background: #fff; }
table { width: 862px; table-layout: fixed; border-collapse: collapse; color: #000; }
.c33 { width: 33px; } .c32 { width: 32px; } .c138 { width: 138px; } .c120 { width: 120px; } .c87 { width: 87px; } .c107 { width: 107px; } .c90 { width: 90px; } .c80 { width: 80px; } .c95 { width: 95px; }
td, th { padding: 0; overflow: hidden; }
thead th { background: linear-gradient(#f6f9fd, #d4dfec); border-right: 1px solid #9eb6ce; border-bottom: 1px solid #9eb6ce; font: 16px/18px "Liberation Serif", serif; color: #223; }
thead th.act { background: linear-gradient(#f9d99f, #f1c15f); border-color: #f29536; }
thead th.corner { background: linear-gradient(135deg, #a9c4e9 70%, #e8eef8 70%); }
tbody th { background: #e4ecf7; border-right: 1px solid #9eb6ce; border-bottom: 1px solid #9eb6ce; vertical-align: bottom; font: 16px/16px "Liberation Serif", serif; color: #223; }
tbody th.act { background: #ffd58d; border-color: #f29536; }
.h19 { height: 19px; } .h25 { height: 25px; } .h26 { height: 26px; } .h23 { height: 23px; } .h24 { height: 24px; } .h39 { height: 39px; } .h71 { height: 71px; } .h42 { height: 42px; }
.frz, thead th.frz { border-right: 1px solid #000; }
.lb { font: bold 15px/18px "Liberation Sans", sans-serif; padding: 0 0 3px 2px; }
.nt { font: 16px/18px "Liberation Sans", sans-serif; color: #1010d8; padding-left: 3px; white-space: nowrap; }
.line td { border-bottom: 1px solid #000; }
.bx td { border: 1px solid #000; }
.bx td:nth-child(2) { border-left: 0; }
.bt button { display: block; width: 100%; height: 37px; background: #d4d0c8; border: 2px solid; border-color: #e8e6e0 #606060 #606060 #d4d0c8; font: 15px/18px "Noto Sans CJK SC", sans-serif; color: #222; }
.ans { font: bold 16px/18px "Liberation Sans", sans-serif; color: #e81010; text-align: center; }
.hd td { background: #ccffcc; font: bold 14px/18px "Liberation Sans", sans-serif; text-align: center; }
.hd .star { vertical-align: bottom; font: 18px/34px "Liberation Serif", serif; }
.bd td { background: #ffff99; font: 14px/18px Lato, sans-serif; padding-left: 2px; }
.bd td.n { background: #ccffcc; font: bold 16px/18px "Liberation Serif", serif; text-align: center; padding: 0; border-left: 0; }
.bd td.cy { background: #ccffff; } .bd td.ct { text-align: center; }
.bd td.cur { font: 15px/18px "Liberation Serif", "Noto Sans CJK SC", sans-serif; border: 3px double #000; padding: 0; white-space: nowrap; }
.bd a { color: #800050; font: 12px/18px "Liberation Mono", monospace; }
.xscroll { width: 15px; flex: none; display: flex; flex-direction: column; align-items: center; background: linear-gradient(90deg, #6f90c0, #87a6d2); padding: 6px 1px; gap: 12px; }
.xthumb { width: 13px; height: 27px; border: 1px solid #5a7ab0; background: repeating-linear-gradient(#7890b8 0 1px, transparent 1px 3px) center/7px 8px no-repeat, linear-gradient(90deg, #fff, #c8d8ec); }
.xscroll .dn { margin-top: auto; }

.stabs { height: 16px; flex: none; display: flex; align-items: stretch; background: #a9c4ea; color: #1f3f8c; border-top: 1px solid #7f9fcc; }
.stabs a { width: 44px; padding-left: 10px; margin: 0; font: 12px/16px "Liberation Mono", monospace; background: linear-gradient(115deg, transparent 6px, #7f9fcc 6px 7px, #cfe0f6 7px); border-bottom: 1px solid #7f9fcc; }
.stabs a.on { width: 75px; padding-left: 12px; background: #fff; }
.stabs a.new { width: 38px; }
.hs { margin-left: auto; width: 193px; display: flex; align-items: center; background: #7f9ecb; padding: 0 18px 0 0; gap: 8px; }
.split { width: 4px; height: 13px; background: #fff; border: 1px solid #7f9fcc; }
.lf { border: 4px solid transparent; border-right-color: #33507c; border-left: 0; } .rt { margin-left: auto; border: 4px solid transparent; border-left-color: #33507c; border-right: 0; }
.hthumb { width: 31px; height: 13px; margin-left: 6px; border: 1px solid #5a7ab0; background: repeating-linear-gradient(90deg, #7890b8 0 1px, transparent 1px 3px) center/9px 7px no-repeat, linear-gradient(#fff, #c8d8ec); }
.status { height: 22px; flex: none; margin: 0 -3px; display: flex; align-items: center; background: linear-gradient(#dce9fb, #b4d0f5 40%, #c4dbf8); border-top: 1px solid #6f93c8; font: 12px/20px "Noto Sans", "Noto Sans CJK SC", sans-serif; padding-right: 4px; }
.ready { width: 42px; padding-left: 9px; border-right: 1px solid #9ab8e0; white-space: nowrap; }
.vw { margin-left: auto; height: 21px; display: flex; align-items: center; padding-left: 6px; border-left: 1px solid #6f93c8; }
.vw button { width: 19px; height: 18px; display: flex; align-items: center; justify-content: center; }
.pct { width: 48px; text-align: center; }
.pct, .status .zb, .status input, .status > svg { flex: none; }
.zb { width: 16px; height: 16px; border-radius: 8px; border: 1px solid #4a6a9c; background: #eef4fc; font: bold 14px/13px "Noto Sans", sans-serif; color: #33507c; }
.status input { appearance: none; width: 102px; height: 16px; background: linear-gradient(#5a7ab0, #5a7ab0) center/100% 1px no-repeat; }
.status input::-webkit-slider-thumb { appearance: none; width: 9px; height: 13px; background: #eef4fc; border: 1px solid #4a6a9c; border-radius: 1px 1px 5px 5px; }
.status > svg { margin-left: 7px; }

.badge { position: absolute; right: -28px; top: 260px; width: 47px; height: 47px; border-radius: 24px; border: 3px solid #e8f4e8; outline: 1px solid #8a9a8a; background: radial-gradient(circle at 50% 20%, #a0f0a0, #2fc050 60%); color: #fff; font: bold 12px/40px "Noto Sans", sans-serif; padding-left: 2px; }

/* taskbar */
.taskbar { height: 58px; flex: none; display: flex; background: #d4d0c8; border-top: 1px solid #fff; padding: 3px 0 0 2px; overflow: hidden; }
.startcol { width: 100px; flex: none; border-right: 1px solid #888; }
.start { width: 47px; height: 22px; display: flex; align-items: center; gap: 1px; padding-left: 1px; border: 1px solid; border-color: #fff #404040 #404040 #fff; white-space: nowrap; font: 12px/18px "Noto Sans CJK SC", sans-serif; }
.clover { margin: 4px 0 0 60px; }
.tasks { flex: 1; min-width: 0; display: flex; flex-direction: column; gap: 2px; padding-left: 9px; }
.trow { display: flex; height: 22px; flex: none; gap: 1px; }
.trow button, .trow i { flex: 1; min-width: 0; display: flex; align-items: center; gap: 4px; padding: 0 3px 0 4px; }
.trow button { border: 1px solid; border-color: #fff #404040 #404040 #fff; box-shadow: inset -1px -1px #808080; font: 11px/18px "Noto Sans", "Noto Sans CJK SC", sans-serif; overflow: hidden; white-space: nowrap; }
.trow .pressed { background: #f4f2ee; border-color: #404040 #fff #fff #404040; box-shadow: none; }
.quick { margin: 3px 8px 0; }
.lang { width: 40px; flex: none; padding: 2px 0 0 19px; }
.tray { width: 172px; flex: none; display: flex; border-top: 1px solid #808080; border-left: 1px solid #808080; }
.clock { width: 62px; display: flex; flex-direction: column; align-items: center; gap: 1px; padding-top: 6px; font: 11px/18px "Noto Sans", "Noto Sans CJK SC", sans-serif; white-space: nowrap; }
.mon { margin: 28px 0 0 6px; }
```
